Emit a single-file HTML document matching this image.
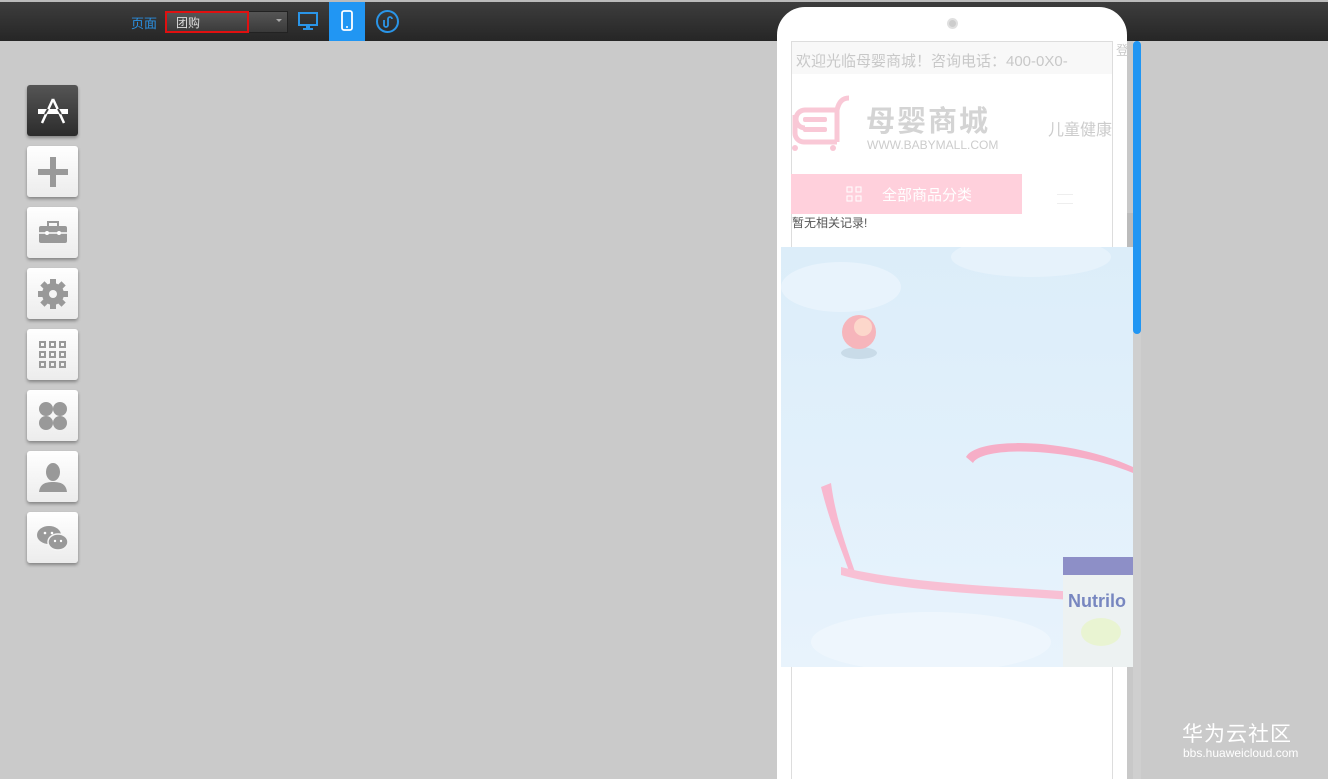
<!DOCTYPE html>
<html style="width:1328px;height:779px;overflow:hidden"><head><meta charset="utf-8"><style>
*{margin:0;padding:0;box-sizing:border-box}
body{width:1328px;height:779px;overflow:hidden;background:#cacaca;font-family:"Liberation Sans","Noto Sans CJK SC",sans-serif;position:relative}
.top{position:absolute;left:0;top:0;width:1328px;height:41px;background:linear-gradient(#3d3d3d,#262626);border-top:2px solid #bbb}
.abs{position:absolute}
.btn{position:absolute;left:27px;width:51px;height:51px;background:linear-gradient(#fff,#ececec);border-radius:3px;box-shadow:0 2px 3px rgba(0,0,0,.35);display:flex;align-items:center;justify-content:center}
</style></head><body>
<div class="top"></div>
<div class="abs" style="left:131px;top:13px;color:#2a8fe0;font-size:13px">页面</div>
<div class="abs" style="left:165px;top:11px;width:123px;height:22px;background:linear-gradient(#555,#3a3a3a);border:1px solid #222"></div>
<div class="abs" style="left:165px;top:11px;width:84px;height:22px;border:2px solid #e01010"></div>
<div class="abs" style="left:176px;top:14px;color:#ddd;font-size:12px">团购</div>
<div class="abs" style="left:276px;top:19px;width:0;height:0;border-left:3px solid transparent;border-right:3px solid transparent;border-top:3px solid #aaa"></div>
<svg class="abs" style="left:297px;top:10px" width="22" height="22" viewBox="0 0 22 22"><rect x="2" y="3" width="18" height="12" fill="none" stroke="#2a95e8" stroke-width="2"/><rect x="9" y="15" width="4" height="3" fill="#2a95e8"/><rect x="6" y="18" width="10" height="2" fill="#2a95e8"/></svg>
<div class="abs" style="left:329px;top:2px;width:36px;height:39px;background:#2196f3"></div>
<svg class="abs" style="left:338px;top:10px" width="18" height="22" viewBox="0 0 18 22"><rect x="4" y="1" width="10" height="19" rx="2" fill="none" stroke="#fff" stroke-width="1.8"/><circle cx="9" cy="17" r="1" fill="#fff"/></svg>
<svg class="abs" style="left:375px;top:9px" width="25" height="25" viewBox="0 0 25 25"><circle cx="12.5" cy="12.5" r="10.5" fill="none" stroke="#2a95e8" stroke-width="2"/><path d="M9 11v5a2 2 0 0 0 4 0v-6a2 2 0 0 1 4 0" fill="none" stroke="#2a95e8" stroke-width="1.8"/></svg>

<div class="btn" style="top:85px;background:linear-gradient(#555,#2c2c2c)"><svg width="34" height="30" viewBox="0 0 34 30"><path d="M17 3L6 27M17 3l11 24" stroke="#fff" stroke-width="2.5"/><rect x="2" y="13" width="30" height="5" fill="#fff"/><path d="M12 13l-3 5M22 13l3 5" stroke="#444" stroke-width="2"/></svg></div>
<div class="btn" style="top:146px"><svg width="34" height="34"><rect x="14" y="2" width="6" height="30" fill="#999"/><rect x="2" y="14" width="30" height="6" fill="#999"/></svg></div>
<div class="btn" style="top:207px"><svg width="30" height="24"><rect x="1" y="5" width="28" height="17" rx="2" fill="#999"/><rect x="10" y="1" width="10" height="5" fill="none" stroke="#999" stroke-width="2"/><line x1="1" y1="12" x2="29" y2="12" stroke="#fff" stroke-width="1.5"/><circle cx="9" cy="12" r="2" fill="#fff"/><circle cx="21" cy="12" r="2" fill="#fff"/></svg></div>
<div class="btn" style="top:268px"><svg width="32" height="32" viewBox="0 0 32 32"><g fill="#999"><circle cx="16" cy="16" r="11"/><rect x="13" y="1" width="6" height="30"/><rect x="1" y="13" width="30" height="6"/><rect x="13" y="1" width="6" height="30" transform="rotate(45 16 16)"/><rect x="13" y="1" width="6" height="30" transform="rotate(-45 16 16)"/></g><circle cx="16" cy="16" r="4" fill="#f5f5f5"/></svg></div>
<div class="btn" style="top:329px"><svg width="30" height="30"><g fill="none" stroke="#999" stroke-width="2"><rect x="2" y="2" width="5" height="5"/><rect x="12" y="2" width="5" height="5"/><rect x="22" y="2" width="5" height="5"/><rect x="2" y="12" width="5" height="5"/><rect x="12" y="12" width="5" height="5"/><rect x="22" y="12" width="5" height="5"/><rect x="2" y="22" width="5" height="5"/><rect x="12" y="22" width="5" height="5"/><rect x="22" y="22" width="5" height="5"/></g></svg></div>
<div class="btn" style="top:390px"><svg width="30" height="30"><g fill="#999"><ellipse cx="8" cy="8" rx="7" ry="7"/><ellipse cx="22" cy="8" rx="7" ry="7"/><ellipse cx="8" cy="22" rx="7" ry="7"/><ellipse cx="22" cy="22" rx="7" ry="7"/></g></svg></div>
<div class="btn" style="top:451px"><svg width="32" height="32"><ellipse cx="16" cy="11" rx="7" ry="9" fill="#999"/><path d="M2 31c1-8 6-10 14-10s13 2 14 10z" fill="#999"/></svg></div>
<div class="btn" style="top:512px"><svg width="34" height="30"><ellipse cx="13" cy="12" rx="12" ry="9" fill="#999"/><ellipse cx="22" cy="19" rx="10" ry="8" fill="#999" stroke="#f5f5f5" stroke-width="1.5"/><circle cx="9" cy="10" r="1.3" fill="#fff"/><circle cx="16" cy="10" r="1.3" fill="#fff"/><circle cx="19" cy="18" r="1.2" fill="#fff"/><circle cx="25" cy="18" r="1.2" fill="#fff"/></svg></div>

<!-- phone -->
<div class="abs" style="left:777px;top:7px;width:350px;height:772px;background:#fff;border-radius:28px 28px 0 0"></div>
<div class="abs" style="left:947px;top:18px;width:11px;height:11px;border-radius:50%;background:#ccc;border:2px solid #e0e0e0"></div>
<div class="abs" style="left:1127px;top:41px;width:6px;height:738px;background:#c8c8c8"></div>
<div class="abs" style="left:1133px;top:41px;width:8px;height:738px;background:#cfcfcf"></div>
<div class="abs" style="left:1133px;top:41px;width:8px;height:293px;background:#2196f3;border-radius:4px"></div>
<div class="abs" style="left:791px;top:41px;width:322px;height:745px;border:1px solid #ddd"></div>
<div class="abs" style="left:792px;top:42px;width:320px;height:32px;background:#f8f8f8"></div>
<div class="abs" style="left:796px;top:50px;font-size:15px;color:#c8c8c8;white-space:nowrap">欢迎光临母婴商城！咨询电话：400-0X0-</div>
<div class="abs" style="left:1116px;top:40px;font-size:13px;color:#ccc">登</div>
<svg class="abs" style="left:791px;top:95px" width="62" height="58"><path d="M14 15h32M14 15a9 9 0 0 0 0 18a9 9 0 0 0 0 0M4 20v18a9 9 0 0 0 9 9h33M46 15v32M46 15c2-9 6-12 12-12" fill="none" stroke="#f9c8d6" stroke-width="5"/><rect x="12" y="22" width="24" height="5" rx="2" fill="#f9c8d6"/><rect x="12" y="32" width="24" height="5" rx="2" fill="#f9c8d6"/><circle cx="4" cy="53" r="3" fill="#f9c8d6"/><circle cx="42" cy="53" r="3" fill="#f9c8d6"/></svg>
<div class="abs" style="left:866px;top:98px;font-size:29px;font-weight:bold;color:#d4d4d4;letter-spacing:2px">母婴商城</div>
<div class="abs" style="left:867px;top:138px;font-size:12px;color:#ccc">WWW.BABYMALL.COM</div>
<div class="abs" style="left:1048px;top:116px;font-size:16px;color:#ccc;white-space:nowrap;width:65px;overflow:hidden">儿童健康管</div>
<div class="abs" style="left:791px;top:174px;width:231px;height:40px;background:#ffd0dc"></div>
<svg class="abs" style="left:846px;top:186px" width="16" height="16"><g fill="none" stroke="#fff"><rect x="1" y="1" width="5" height="5"/><rect x="10" y="1" width="5" height="5"/><rect x="1" y="10" width="5" height="5"/><rect x="10" y="10" width="5" height="5"/></g></svg>
<div class="abs" style="left:882px;top:184px;font-size:15px;color:#fff">全部商品分类</div>
<div class="abs" style="left:1057px;top:194px;width:16px;height:10px;border-top:1px solid #eee;border-bottom:1px solid #eee"></div>
<div class="abs" style="left:792px;top:214px;font-size:12px;color:#555">暂无相关记录!</div>
<div class="abs" style="left:1127px;top:213px;width:6px;height:34px;background:#bbb"></div>
<!-- banner -->
<div class="abs" style="left:781px;top:247px;width:352px;height:420px;background:linear-gradient(180deg,#dcedf9 0%,#e1f0fb 50%,#e8f3fc 100%);overflow:hidden">
<svg width="352" height="420"><ellipse cx="60" cy="40" rx="60" ry="25" fill="#e8f3fc"/><ellipse cx="250" cy="10" rx="80" ry="20" fill="#e6f2fb"/><ellipse cx="150" cy="395" rx="120" ry="30" fill="#eef6fd"/><ellipse cx="78" cy="106" rx="18" ry="6" fill="#c9dbe8"/><circle cx="78" cy="85" r="17" fill="#f6b5bb"/><circle cx="82" cy="80" r="9" fill="#fcd7cb"/><path d="M40 240c10 40 20 60 30 90l5-2c-10-30-20-55-25-92z" fill="#f8b8cf"/><path d="M185 210c10-20 100-20 167 10v6c-60-25-150-28-160-10z" fill="#f6aec7"/><path d="M60 320c80 20 200 20 292 30v8c-100-10-220-10-292-30z" fill="#f8c0d4"/><rect x="282" y="310" width="70" height="110" fill="#edf2f2"/><rect x="282" y="310" width="70" height="18" fill="#8d8fc7"/><text x="287" y="360" font-size="18" font-weight="bold" fill="#7887c0" font-family="Liberation Sans">Nutrilo</text><ellipse cx="320" cy="385" rx="20" ry="14" fill="#e9f4d2"/></svg>
</div>
<div class="abs" style="left:1182px;top:718px;font-size:21px;color:#fff;letter-spacing:1px">华为云社区</div>
<div class="abs" style="left:1183px;top:746px;font-size:12px;color:#fff">bbs.huaweicloud.com</div>
</body></html>
